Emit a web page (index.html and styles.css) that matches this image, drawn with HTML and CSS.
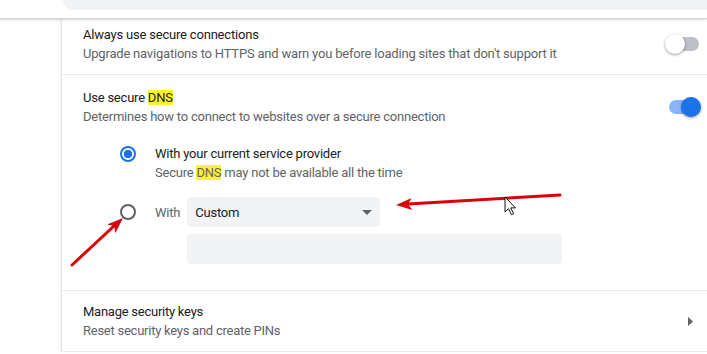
FILE: index.html
```html
<!DOCTYPE html>
<html lang="en">
<head>
    <meta charset="UTF-8">
    <title>Settings - Security</title>
    <link rel="stylesheet" href="styles.css">
</head>
<body>
    <div class="top-strip">
        <div class="search-bar"></div>
    </div>

    <div class="page">
        <div class="gutter"></div>
        <div class="card">
            <div class="row row-first">
                <div class="row-text">
                    <div class="label">Always use secure connections</div>
                    <div class="sub">Upgrade navigations to HTTPS and warn you before loading sites that don't support it</div>
                </div>
                <span class="toggle"></span>
            </div>

            <div class="section">
                <div class="row row-dns">
                    <div class="row-text">
                        <div class="label">Use secure <mark>DNS</mark></div>
                        <div class="sub">Determines how to connect to websites over a secure connection</div>
                    </div>
                    <span class="toggle on"></span>
                </div>

                <div class="dns-options">
                    <div class="option">
                        <span class="radio checked"></span>
                        <div class="option-text">
                            <div class="label">With your current service provider</div>
                            <div class="sub">Secure <mark>DNS</mark> may not be available all the time</div>
                        </div>
                    </div>
                    <div class="option option-custom">
                        <div class="custom-line">
                            <span class="radio"></span>
                            <span class="with">With</span>
                            <div class="select">
                                <span>Custom</span>
                                <svg width="10" height="5" viewBox="0 0 10 5"><path d="M0 0h10L5 5z" fill="#5f6368"/></svg>
                            </div>
                        </div>
                        <div class="text-field"></div>
                    </div>
                </div>
            </div>

            <div class="row row-link">
                <div class="row-text">
                    <div class="label">Manage security keys</div>
                    <div class="sub">Reset security keys and create PINs</div>
                </div>
                <svg class="chevron" width="5" height="9" viewBox="0 0 5 9"><path d="M0 0l5 4.5L0 9z" fill="#5f6368"/></svg>
            </div>
        </div>
    </div>

    <!-- red annotation arrows + mouse pointer drawn over the screenshot -->
    <svg class="annotations" width="707" height="354" viewBox="0 0 707 354">
        <line x1="72" y1="265" x2="114" y2="226" stroke="#d6060a" stroke-width="3" stroke-linecap="round"/>
        <polygon points="123,218 107.1,224.4 114.2,226.1 115.3,233.2" fill="#d6060a"/>
        <line x1="560" y1="195" x2="408" y2="204" stroke="#d6060a" stroke-width="3" stroke-linecap="round"/>
        <polygon points="396,205 411.6,198 408,204.3 412.4,210" fill="#d6060a"/>
        <path d="M505 197v15l3.5-3.3 3 6 2.2-1-3-5.8h4.8z" fill="#fff" stroke="#111" stroke-width="1" stroke-linejoin="round"/>
    </svg>
</body>
</html>
```

FILE: styles.css
```css
body {
    margin: 0;
    background: #fff;
    font-family: Roboto, "Liberation Sans", sans-serif;
    font-size: 13px;
    letter-spacing: -0.22px;
    color: #202124;
    width: 707px;
    height: 354px;
    overflow: hidden;
    position: relative;
}

.top-strip {
    height: 18px;
    border-bottom: 1px solid #d6d6d6;
    box-shadow: 0 1px 2px rgba(0, 0, 0, 0.18);
    position: relative;
    z-index: 1;
}

.search-bar {
    margin-left: 63px;
    height: 10px;
    background: #f1f3f4;
    border-bottom-left-radius: 10px;
}

.page {
    display: flex;
}

.gutter {
    width: 61px;
    flex: none;
}

.card {
    flex: 1;
    border-left: 1px solid #e3e3e3;
    box-shadow: -1px 0 2px rgba(0, 0, 0, 0.06);
    border-bottom: 1px solid #ececec;
}

.row {
    display: flex;
    align-items: center;
    justify-content: space-between;
    padding-left: 21px;
    padding-right: 5px;
}

.row-text {
    line-height: 19px;
}

.label {
    color: #202124;
}

.sub {
    color: #5f6368;
}

mark {
    background: #fbf231;
    color: inherit;
}

.row-first {
    padding-top: 6px;
    padding-bottom: 11px;
    border-bottom: 1px solid #e8eaed;
    letter-spacing: -0.2px;
}

.row-dns {
    padding-top: 13px;
}

.section {
    border-bottom: 1px solid #e8eaed;
    padding-bottom: 26px;
}

.dns-options {
    padding-left: 58px;
    margin-top: 18px;
}

.option {
    display: flex;
    align-items: flex-start;
    gap: 19px;
    line-height: 19px;
}

.option .radio {
    margin-top: 2px;
}

.radio {
    box-sizing: border-box;
    width: 16px;
    height: 16px;
    flex: none;
    border-radius: 50%;
    border: 2px solid #5f6368;
}

.radio.checked {
    border-color: #1a73e8;
    background: radial-gradient(circle, #1a73e8 0 4px, #fff 4.5px);
}

.option-custom {
    display: block;
    margin-top: 15px;
}

.custom-line {
    display: flex;
    align-items: center;
}

.option-custom .radio {
    margin-top: 0;
    margin-right: 19px;
}

.with {
    color: #5f6368;
    margin-right: 7px;
}

.select {
    width: 193px;
    height: 30px;
    box-sizing: border-box;
    background: #f1f3f4;
    border-radius: 4px;
    display: flex;
    align-items: center;
    justify-content: space-between;
    padding: 0 8px 0 8px;
    color: #202124;
}

.text-field {
    margin: 7px 0 0 67px;
    width: 375px;
    height: 30px;
    background: #f1f3f4;
    border-radius: 4px;
}

.row-link {
    padding-top: 11px;
    padding-bottom: 11px;
    padding-right: 14px;
    letter-spacing: -0.25px;
}

.toggle {
    position: relative;
    width: 28px;
    height: 14px;
    margin-right: 3px;
    border-radius: 7px;
    background: #bdc1c6;
}

.toggle::after {
    content: "";
    position: absolute;
    top: -3px;
    left: -6px;
    width: 20px;
    height: 20px;
    border-radius: 50%;
    background: #fff;
    box-shadow: 0 1px 3px rgba(0, 0, 0, 0.4);
}

.toggle.on {
    background: #8ab4f8;
    margin-right: 5px;
}

.toggle.on::after {
    left: 12px;
    background: #1a73e8;
}

.annotations {
    position: absolute;
    top: 0;
    left: 0;
    pointer-events: none;
}
```
